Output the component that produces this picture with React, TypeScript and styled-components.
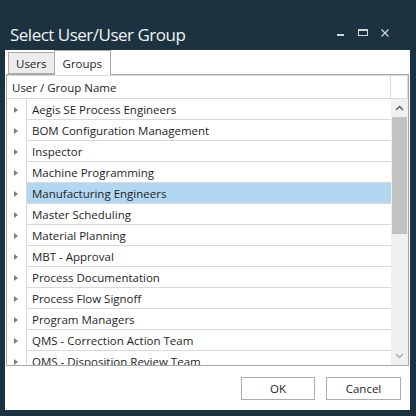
import React from 'react';
import styled, { createGlobalStyle } from 'styled-components';

const groups = [
  'Aegis SE Process Engineers',
  'BOM Configuration Management',
  'Inspector',
  'Machine Programming',
  'Manufacturing Engineers',
  'Master Scheduling',
  'Material Planning',
  'MBT - Approval',
  'Process Documentation',
  'Process Flow Signoff',
  'Program Managers',
  'QMS - Correction Action Team',
  'QMS - Disposition Review Team',
];

const SELECTED = 'Manufacturing Engineers';

const GlobalStyle = createGlobalStyle`
  html, body {
    margin: 0;
    padding: 0;
    background: #1c3241;
  }
  * {
    box-sizing: border-box;
  }
`;

const App = () => {
  return (
    <>
      <GlobalStyle />
      <Window>
        <TitleBar>
          <Title>Select User/User Group</Title>
          <WindowControls>
            <ControlButton aria-label="minimize">
              <svg width="8" height="8" viewBox="0 0 8 8">
                <rect x="0" y="5" width="7" height="2" fill="#d0d5d9" />
              </svg>
            </ControlButton>
            <ControlButton aria-label="maximize">
              <svg width="10" height="8" viewBox="0 0 10 8">
                <rect x="0.5" y="0.5" width="9" height="6" fill="none" stroke="#d0d5d9" />
                <rect x="0" y="0" width="10" height="2" fill="#d0d5d9" />
              </svg>
            </ControlButton>
            <ControlButton aria-label="close">
              <svg width="8" height="8" viewBox="0 0 8 8">
                <path d="M0.5 0.5 L7.5 7.5 M7.5 0.5 L0.5 7.5" stroke="#d0d5d9" strokeWidth="1.2" />
              </svg>
            </ControlButton>
          </WindowControls>
        </TitleBar>

        <Body>
          <TabStrip>
            <Tab>Users</Tab>
            <Tab active>Groups</Tab>
          </TabStrip>

          <ListPanel>
            <HeaderRow>
              <HeaderCell>User / Group Name</HeaderCell>
              <ScrollCorner />
            </HeaderRow>
            <ListBody>
              <Rows>
                {groups.map((name) => (
                  <Row key={name}>
                    <Gutter>
                      <Expander />
                    </Gutter>
                    <NameCell selected={name === SELECTED}>{name}</NameCell>
                  </Row>
                ))}
              </Rows>
              <ScrollBar>
                <ArrowButton>
                  <svg width="9" height="6" viewBox="0 0 9 6">
                    <path d="M1 5 L4.5 1.5 L8 5" fill="none" stroke="#606060" strokeWidth="1.5" />
                  </svg>
                </ArrowButton>
                <Track>
                  <Thumb />
                </Track>
                <ArrowButton>
                  <svg width="9" height="6" viewBox="0 0 9 6">
                    <path d="M1 1 L4.5 4.5 L8 1" fill="none" stroke="#a0a0a0" strokeWidth="1.2" />
                  </svg>
                </ArrowButton>
              </ScrollBar>
            </ListBody>
          </ListPanel>

          <Footer>
            <DialogButton width={74}>OK</DialogButton>
            <DialogButton width={75}>Cancel</DialogButton>
          </Footer>
        </Body>
      </Window>
    </>
  );
};

export default App;

const Window = styled.div`
  width: 416px;
  height: 416px;
  display: flex;
  flex-direction: column;
  background: #1c3241;
  font-family: 'Open Sans', 'Noto Sans', sans-serif;
`;

const TitleBar = styled.div`
  height: 50px;
  display: flex;
  align-items: flex-end;
  justify-content: space-between;
  padding: 0 0 4px 10px;
`;

const Title = styled.h1`
  margin: 0;
  font-size: 17px;
  font-weight: 400;
  color: #eef1f3;
  letter-spacing: -0.5px;
`;

const WindowControls = styled.div`
  display: flex;
  align-items: center;
  gap: 12px;
  padding-right: 26px;
  padding-bottom: 9px;
`;

const ControlButton = styled.div`
  display: flex;
  align-items: center;
  justify-content: center;
  width: 10px;
  height: 8px;
`;

const Body = styled.div`
  flex: 1;
  margin: 0 6px 6px 5px;
  background: #ffffff;
  display: flex;
  flex-direction: column;
`;

const TabStrip = styled.div`
  height: 24px;
  display: flex;
  align-items: flex-end;
  padding-left: 3px;
`;

const Tab = styled.div<{ active?: boolean }>`
  height: ${({ active }) => (active ? '25px' : '22px')};
  margin-bottom: ${({ active }) => (active ? '-1px' : '0')};
  padding: 0 ${({ active }) => (active ? '8px' : '7px')};
  display: flex;
  align-items: center;
  font-size: 11.5px;
  color: #1e1e1e;
  background: ${({ active }) => (active ? '#ffffff' : '#ececec')};
  border: 1px solid #acacac;
  border-bottom: ${({ active }) => (active ? 'none' : '1px solid #acacac')};
  ${({ active }) => (active ? 'margin-left: -1px; position: relative; z-index: 1;' : '')}
`;

const ListPanel = styled.div`
  height: 292px;
  margin: 0 1px;
  border: 1px solid #a7a7a7;
  display: flex;
  flex-direction: column;
  overflow: hidden;
`;

const HeaderRow = styled.div`
  height: 24px;
  display: flex;
  border-top: 1px solid #d9d9d9;
  border-bottom: 1px solid #d9d9d9;
`;

const HeaderCell = styled.div`
  flex: 1;
  display: flex;
  align-items: center;
  padding-left: 5px;
  font-size: 11.5px;
  color: #1e1e1e;
  border-right: 1px solid #d9d9d9;
`;

const ScrollCorner = styled.div`
  width: 17px;
  border-right: 1px solid #d9d9d9;
`;

const ListBody = styled.div`
  flex: 1;
  display: flex;
  min-height: 0;
`;

const Rows = styled.div`
  flex: 1;
  overflow: hidden;
`;

const Row = styled.div`
  height: 21px;
  display: flex;
`;

const Gutter = styled.div`
  width: 20px;
  display: flex;
  align-items: center;
  justify-content: center;
  border-right: 1px solid #d9d9d9;
  padding-right: 2px;
`;

const Expander = styled.span`
  width: 0;
  height: 0;
  border-top: 3px solid transparent;
  border-bottom: 3px solid transparent;
  border-left: 4px solid #7d7d7d;
`;

const NameCell = styled.div<{ selected?: boolean }>`
  flex: 1;
  display: flex;
  align-items: center;
  padding-left: 5px;
  font-size: 11.5px;
  color: #1e1e1e;
  white-space: nowrap;
  background: ${({ selected }) => (selected ? '#b3d7f1' : 'transparent')};
  border-bottom: 1px solid #d9d9d9;
`;

const ScrollBar = styled.div`
  width: 17px;
  display: flex;
  flex-direction: column;
  background: #f0f0f0;
`;

const ArrowButton = styled.div`
  height: 18px;
  display: flex;
  align-items: center;
  justify-content: center;
`;

const Track = styled.div`
  flex: 1;
  padding: 0 1px;
`;

const Thumb = styled.div`
  height: 117px;
  background: #c2c2c2;
`;

const Footer = styled.div`
  flex: 1;
  display: flex;
  justify-content: flex-end;
  align-items: flex-start;
  gap: 11px;
  padding: 11px 9px 0 0;
`;

const DialogButton = styled.button<{ width: number }>`
  width: ${({ width }) => width}px;
  height: 23px;
  background: #ffffff;
  border: 1px solid #adadad;
  font-family: inherit;
  font-size: 11.5px;
  color: #1e1e1e;
  padding: 0;
`;
